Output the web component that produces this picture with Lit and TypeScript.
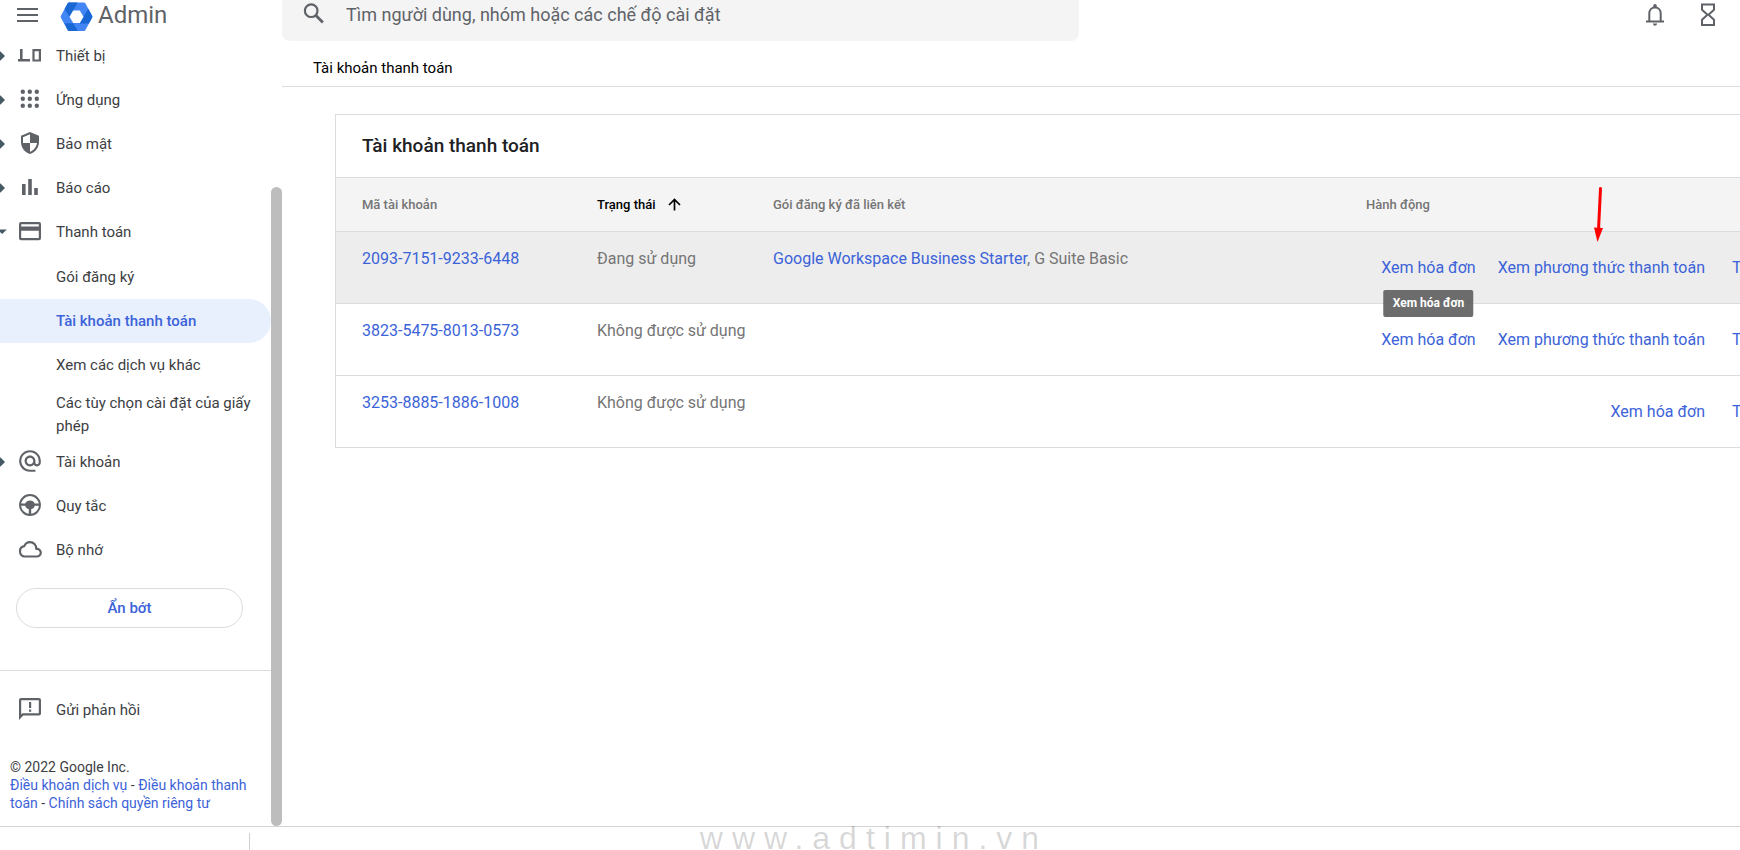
import { LitElement, html, css, svg, nothing } from "lit";
import { customElement } from "lit/decorators.js";
import { classMap } from "lit/directives/class-map.js";

const icons: Record<string, unknown> = {
  devices: svg`<path d="M3 7h2.6v10H13v2.6H1V17h2z"/><path fill-rule="evenodd" d="M15.400 7h8.600v12.600h-8.600zM17.600 9.200v8.200h4.200V9.200z"/>`,
  apps: svg`${[6, 13, 20].map((x) => [6, 13, 20].map((y) => svg`<circle cx=${x - 0.2} cy=${y - 0.2} r="2.200"/>`))}`,
  shield: svg`<path fill-rule="evenodd" d="M13 2l9 3.800v6.200c0 5.500-3.700 10.300-9 12-5.300-1.700-9-6.500-9-12V5.800zM13 4.300L6 7.200V13h7zM13 13v8.800c3.900-1.500 6.500-4.900 7-8.800z"/>`,
  bars: svg`<path d="M5 10h3.600v11H5zM11.200 5h3.600v16h-3.600zM17.200 14h3.600v7h-3.600z"/>`,
  card: svg`<path fill-rule="evenodd" d="M4 4h18q2 0 2 2v14.300q0 2-2 2H4q-2 0-2-2V6q0-2 2-2zM4.200 6.200v2.300h17.600V6.200zM4.200 12.700v7.400h17.600v-7.400z"/>`,
  at: svg`<g transform="scale(1.0834)"><path d="M12 2C6.480 2 2 6.480 2 12s4.480 10 10 10h5v-2h-5c-4.340 0-8-3.660-8-8s3.660-8 8-8 8 3.660 8 8v1.430c0 .790-.710 1.570-1.500 1.570s-1.500-.780-1.500-1.570V12c0-2.760-2.240-5-5-5s-5 2.240-5 5 2.240 5 5 5c1.380 0 2.640-.560 3.540-1.470.650.890 1.770 1.470 2.960 1.470 1.970 0 3.500-1.600 3.500-3.570V12c0-5.520-4.480-10-10-10zm0 13c-1.660 0-3-1.340-3-3s1.340-3 3-3 3 1.340 3 3-1.340 3-3 3z"/></g>`,
  wheel: svg`<circle cx="13" cy="13" r="9.900" fill="none" stroke="currentColor" stroke-width="2"/><path d="M3 11.400h5.300C9 9.600 10.800 8.400 13 8.400s4 1.200 4.700 3H23v2.400h-5.200c-.500 1.700-1.800 3-3.600 3.500V23h-2.400v-5.700c-1.800-.500-3.100-1.800-3.600-3.500H3z"/>`,
  cloud: svg`<path fill="none" stroke="currentColor" stroke-width="2.200" stroke-linejoin="round" d="M7.600 20.500h12.200a3.800 3.800 0 0 0 .400-7.600h-.900C19.300 9 16.600 6.100 13 6.100c-2.700 0-4.700 1.400-5.700 4C4.900 10.400 3 12.500 3 15.300c0 3 2 5.200 4.600 5.200z"/>`,
  feedback: svg`<path fill-rule="evenodd" d="M4 2h18q2 0 2 2v13.500q0 2-2 2H6.300L2 24V4q0-2 2-2zM4.200 4.200v14.200l1.200-1.100h16.400V4.200z"/><path d="M12 6h2.200v6H12zM12 13.600h2.200v2.200H12z"/>`,
};

const icon = (name: string) =>
  html`<svg class="icon" viewBox="0 0 26 26" width="26" height="26" fill="currentColor" aria-hidden="true">${icons[name]}</svg>`;

interface NavItem {
  label: string;
  icon: string;
  caret?: "right" | "down";
  children?: { label: string; active?: boolean }[];
}

const NAV: NavItem[] = [
  { label: "Thiết bị", icon: "devices", caret: "right" },
  { label: "Ứng dụng", icon: "apps", caret: "right" },
  { label: "Bảo mật", icon: "shield", caret: "right" },
  { label: "Báo cáo", icon: "bars", caret: "right" },
  {
    label: "Thanh toán",
    icon: "card",
    caret: "down",
    children: [
      { label: "Gói đăng ký" },
      { label: "Tài khoản thanh toán", active: true },
      { label: "Xem các dịch vụ khác" },
      { label: "Các tùy chọn cài đặt của giấy phép" },
    ],
  },
  { label: "Tài khoản", icon: "at", caret: "right" },
  { label: "Quy tắc", icon: "wheel" },
  { label: "Bộ nhớ", icon: "cloud" },
];

@customElement("admin-sidebar")
export class AdminSidebar extends LitElement {
  static styles = css`
    :host { display: flex; color: #3c4043; font-size: 15px; }
    .content { flex: 1; min-width: 0; display: flex; flex-direction: column; }
    .brand { display: flex; align-items: center; height: 34px; padding: 0 0 4px 17px; box-sizing: border-box; }
    .menu { border: 0; background: none; padding: 0; display: flex; color: #5f6368; }
    .logo { margin-left: 22px; margin-top: 4px; }
    .name { margin-left: 5px; font-size: 24px; line-height: 30px; color: #5f6368; }
    ul { list-style: none; margin: 0; padding: 0; }
    .nested { padding: 1px 0 0; }
    .item { display: flex; align-items: center; min-height: 44px; color: inherit; text-decoration: none; }
    .caret { width: 17px; display: flex; color: #455a64; }
    .icon { color: #5f6368; flex: none; margin-bottom: 3px; }
    .label { margin-left: 13px; line-height: 20px; }
    .sub { padding: 2px 12px 2px 56px; min-height: 40px; line-height: 23px; }
    .nested li:last-child .sub { padding-top: 5px; }
    .active { background: #e8f0fe; color: #3c63d8; font-weight: 500; border-radius: 0 22px 22px 0; }
    .less {
      margin: 16px 28px 0 16px; height: 40px; border: 1px solid #dadce0; border-radius: 20px;
      background: #fff; color: #3c63d8; font: 500 15px/20px Roboto, sans-serif;
    }
    .feedback { margin-top: 42px; border-top: 1px solid #dadce0; padding-top: 17px; }
    .legal { margin: 26px 20px 0 10px; font-size: 14px; line-height: 18px; }
    .legal a { color: #3c63d8; text-decoration: none; }
    .legal p { margin: 0; }
    .track { width: 11px; padding-top: 187px; display: flex; }
    .thumb { flex: 1; background: #bdbdbd; border-radius: 6px; }
  `;

  private caret(kind?: "right" | "down") {
    if (!kind) return nothing;
    return kind === "right"
      ? html`<svg width="6" height="10" viewBox="0 0 6 10" fill="currentColor"><path d="M0 .500h.500L5 5 .500 9.500H0z"/></svg>`
      : html`<svg width="7" height="6" viewBox="0 0 7 6" fill="currentColor"><path d="M0 .500h6.800L2.200 5 0 3z"/></svg>`;
  }

  render() {
    return html`
      <div class="content">
        <div class="brand">
          <button class="menu" aria-label="Trình đơn chính">
            <svg width="21" height="16" viewBox="0 0 21 16" fill="currentColor"><path d="M0 1h21v2H0zM0 7h21v2H0zM0 13h21v2H0z"/></svg>
          </button>
          <svg class="logo" width="33" height="30" viewBox="0 0 33 30" aria-hidden="true">
            <path fill="#4285f4" d="M9 .500h15a1.500 1.500 0 0 1 1.300.800l6.800 12.400a2 2 0 0 1 0 2l-6.800 12.500a1.500 1.500 0 0 1-1.300.800H9a1.500 1.500 0 0 1-1.300-.800L.900 15.700a2 2 0 0 1 0-2L7.700 1.300A1.500 1.500 0 0 1 9 .500z"/>
            <path fill="#1967d2" d="M9 .500h8.500L13.200 8.500 9.600 14.700 4.600 6.900l3.100-5.600A1.500 1.500 0 0 1 9 .500zM28.300 6.700l3.800 7a2 2 0 0 1 0 2l-3.200 5.800h-9.100l3.700-6.800zM4.600 21.200H13.200l4.600 7.800H9a1.500 1.500 0 0 1-1.300-.800z"/>
            <path fill="#fff" d="M13.200 8.500h6.600l3.700 6.200-3.700 6.300h-6.600l-3.700-6.300z"/>
          </svg>
          <span class="name">Admin</span>
        </div>
        <nav>
          <ul>
            ${NAV.map(
              (n) => html`<li>
                <a class="item" href="#"><span class="caret">${this.caret(n.caret)}</span>${icon(n.icon)}<span class="label">${n.label}</span></a>
                ${n.children
                  ? html`<ul class="nested">
                      ${n.children.map(
                        (c) => html`<li><a class=${classMap({ item: true, sub: true, active: !!c.active })} href="#">${c.label}</a></li>`
                      )}
                    </ul>`
                  : nothing}
              </li>`
            )}
          </ul>
        </nav>
        <button class="less">Ẩn bớt</button>
        <div class="feedback">
          <a class="item" href="#"><span class="caret"></span>${icon("feedback")}<span class="label">Gửi phản hồi</span></a>
        </div>
        <div class="legal">
          <p>© 2022 Google Inc.</p>
          <p><a href="#">Điều khoản dịch vụ</a> - <a href="#">Điều khoản thanh toán</a> - <a href="#">Chính sách quyền riêng tư</a></p>
        </div>
      </div>
      <div class="track"><div class="thumb"></div></div>
    `;
  }
}

interface Account {
  id: string;
  status: string;
  plan?: string;
  extra?: string;
  actions: string[];
  hovered?: boolean;
}

const ACCOUNTS: Account[] = [
  {
    id: "2093-7151-9233-6448",
    status: "Đang sử dụng",
    plan: "Google Workspace Business Starter",
    extra: ", G Suite Basic",
    actions: ["Xem hóa đơn", "Xem phương thức thanh toán"],
    hovered: true,
  },
  { id: "3823-5475-8013-0573", status: "Không được sử dụng", actions: ["Xem hóa đơn", "Xem phương thức thanh toán"] },
  { id: "3253-8885-1886-1008", status: "Không được sử dụng", actions: ["Xem hóa đơn"] },
];

@customElement("billing-accounts")
export class BillingAccounts extends LitElement {
  static styles = css`
    :host { display: block; position: relative; border: 1px solid #dadce0; }
    h1 { margin: 0; padding: 19px 26px; font-size: 19px; line-height: 24px; font-weight: 500; color: #202124; }
    table { width: 100%; border-collapse: collapse; table-layout: fixed; }
    .c-id { width: 261px; }
    .c-status { width: 176px; }
    .c-actions { width: 469px; }
    th {
      height: 53px; padding: 0; border-top: 1px solid #dadce0; background: #f4f4f4; text-align: left;
      font-size: 13px; font-weight: 500; color: #757575;
    }
    .sorted { color: #000; }
    .sort { display: flex; align-items: center; gap: 12px; }
    td { height: 71px; padding: 0; border-top: 1px solid #dadce0; vertical-align: top; font-size: 16px; line-height: 24px; color: #757575; }
    th:first-child, td:first-child { padding-left: 26px; }
    .cell { padding-top: 15px; white-space: nowrap; }
    .hovered td { background: #ededed; }
    a { color: #3c63d8; text-decoration: none; }
    .actions { display: flex; gap: 27px; padding-top: 24px; white-space: nowrap; }
    .main-actions { display: flex; justify-content: flex-end; gap: 22px; width: 339px; }
    .anchor { position: relative; }
    .tip {
      position: absolute; top: 34px; left: 50%; transform: translateX(-50%); padding: 4px 9px 5px; border-radius: 2px;
      background: rgba(97, 97, 97, 0.92); color: #fff; font-size: 12px; line-height: 18px; font-weight: 700; z-index: 1;
    }
    .pointer { position: absolute; right: 230px; top: 71px; z-index: 1; }
  `;

  render() {
    return html`
      <h1>Tài khoản thanh toán</h1>
      <table>
        <colgroup><col class="c-id" /><col class="c-status" /><col /><col class="c-actions" /></colgroup>
        <thead>
          <tr>
            <th scope="col">Mã tài khoản</th>
            <th scope="col" class="sorted" aria-sort="ascending">
              <span class="sort">Trạng thái
                <svg width="13" height="13" viewBox="0 0 13 13" fill="none" stroke="currentColor" stroke-width="1.700"><path d="M6.500 12.500V1.500M1 7l5.500-5.500L12 7"/></svg>
              </span>
            </th>
            <th scope="col">Gói đăng ký đã liên kết</th>
            <th scope="col">Hành động</th>
          </tr>
        </thead>
        <tbody>
          ${ACCOUNTS.map(
            (a) => html`<tr class=${classMap({ hovered: !!a.hovered })}>
              <td><div class="cell"><a href="#">${a.id}</a></div></td>
              <td><div class="cell">${a.status}</div></td>
              <td><div class="cell">${a.plan ? html`<a href="#">${a.plan}</a>${a.extra}` : nothing}</div></td>
              <td>
                <div class="actions">
                  <div class="main-actions">
                    ${a.actions.map(
                      (label, i) => html`<span class="anchor"><a href="#">${label}</a>${a.hovered && i === 0
                          ? html`<span class="tip" role="tooltip">${label}</span>`
                          : nothing}</span>`
                    )}
                  </div>
                  <a href="#">Thêm</a>
                </div>
              </td>
            </tr>`
          )}
        </tbody>
      </table>
      <svg class="pointer" width="12" height="57" viewBox="0 0 12 57" aria-hidden="true">
        <path d="M7.500 2.500L5.500 44" stroke="#f00" stroke-width="3" stroke-linecap="round"/><path d="M1 41.500l9 .600L4.500 56z" fill="#f00"/>
      </svg>
    `;
  }
}

@customElement("app-root")
export class AppRoot extends LitElement {
  static styles = css`
    :host { display: flex; flex-direction: column; height: 100vh; overflow: hidden; background: #fff; font-family: Roboto, sans-serif; position: relative; }
    .shell { flex: 1; min-height: 0; display: grid; grid-template-columns: 282px minmax(0, 1fr); }
    .main { overflow: hidden; }
    .top { display: flex; justify-content: space-between; }
    .search {
      display: flex; align-items: center; width: 797px; height: 41px; padding: 0 20px 11px 20px; box-sizing: border-box;
      background: #f4f4f4; border-radius: 0 0 8px 8px; color: #5f6368;
    }
    .search input {
      flex: 1; margin-left: 18px; padding: 0; border: 0; outline: 0; background: none; font: 400 18px/24px Roboto, sans-serif; color: #202124;
    }
    .search input::placeholder { color: #5f6368; opacity: 1; }
    .tools { display: flex; gap: 27px; height: 30px; align-items: center; padding-right: 19px; }
    .tool { border: 0; background: none; padding: 0; display: flex; color: #5f6368; }
    .crumb { margin: 0; padding: 17px 31px 8px; border-bottom: 1px solid #dadce0; font-size: 15px; line-height: 20px; color: #000; }
    .accounts { margin: 27px -96px 0 53px; }
    .foot { flex: none; height: 23px; border-top: 1px solid #d4d4d4; display: flex; }
    .split { width: 249px; margin-top: 6px; border-right: 1px solid #d0d0d0; }
    .mark {
      position: absolute; left: 0; right: 0; bottom: -6px; margin: 0; padding-left: 8px; text-align: center; font: 32px/36px "Liberation Sans", sans-serif;
      letter-spacing: 9px; color: rgba(0, 0, 0, 0.17); pointer-events: none;
    }
  `;

  render() {
    return html`
      <div class="shell">
        <admin-sidebar></admin-sidebar>
        <main class="main">
          <header class="top">
            <label class="search">
              <svg width="26" height="26" viewBox="0 0 26 26" fill="none" stroke="currentColor" aria-hidden="true"><circle cx="9.200" cy="8.700" r="6.300" stroke-width="2.200"/><path d="M13.700 13.200l7.200 7.200" stroke-width="2.800"/></svg>
              <input type="search" aria-label="Tìm kiếm" placeholder="Tìm người dùng, nhóm hoặc các chế độ cài đặt" />
            </label>
            <div class="tools">
              <button class="tool" aria-label="Thông báo">
                <svg width="26" height="26" viewBox="0 0 26 26" fill="none" stroke="currentColor" stroke-width="2"><path d="M7.300 19v-7.500c0-3.400 2.300-6 5.700-6s5.700 2.600 5.700 6V19M4 19.500h18"/><path d="M11.200 5.500V4q0-2 1.800-2t1.800 2v1.500zM10.800 21.500h4.400q-.500 2.300-2.200 2.300t-2.200-2.300z" fill="currentColor" stroke="none"/></svg>
              </button>
              <button class="tool" aria-label="Tác vụ">
                <svg width="26" height="26" viewBox="0 0 26 26" fill="none" stroke="currentColor" stroke-width="2"><path d="M7 2.500h12v5.200L13.500 12.700l5.500 5.100v5.200H7v-5.200l5.500-5.100L7 7.700z"/></svg>
              </button>
            </div>
          </header>
          <p class="crumb">Tài khoản thanh toán</p>
          <billing-accounts class="accounts"></billing-accounts>
        </main>
      </div>
      <footer class="foot"><div class="split"></div></footer>
      <p class="mark">www.adtimin.vn</p>
    `;
  }
}
